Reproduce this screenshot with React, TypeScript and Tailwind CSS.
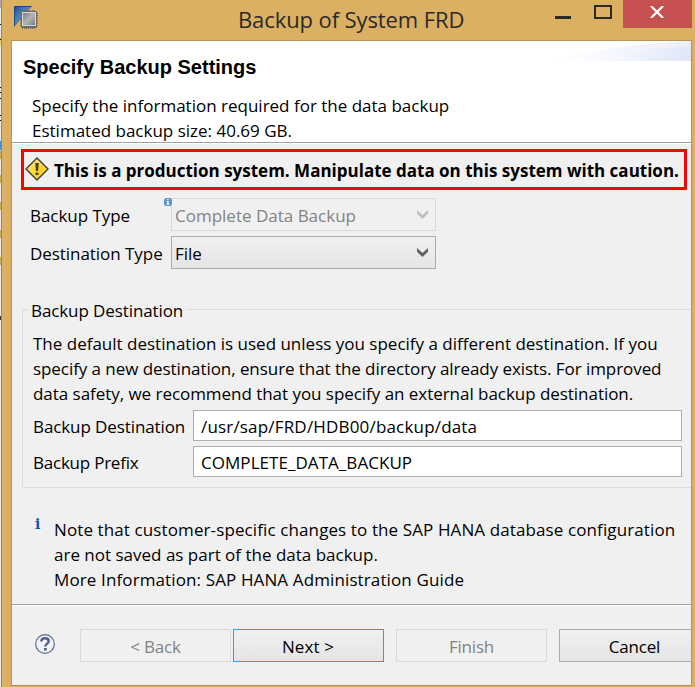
import type { ReactNode } from "react";
import clsx from "clsx";

function AppIcon() {
  const pins = [0, 1, 2, 3, 4, 5, 6];
  return (
    <svg width="25" height="24" viewBox="0 0 25 24" className="shrink-0">
      <defs>
        <linearGradient id="tri" x1="0" y1="0" x2="0.7" y2="0.7">
          <stop offset="0" stopColor="#174a86" />
          <stop offset="0.6" stopColor="#4f86bd" />
          <stop offset="1" stopColor="#1a4f8c" />
        </linearGradient>
        <linearGradient id="chip" x1="0" y1="0" x2="1" y2="1">
          <stop offset="0" stopColor="#808080" />
          <stop offset="0.5" stopColor="#b4b4b4" />
          <stop offset="1" stopColor="#7c7c7c" />
        </linearGradient>
      </defs>
      <path d="M0 0h18L0 21z" fill="url(#tri)" />
      <path d="M0 0h18l-1 1H1v18.5l-1 1z" fill="#1b4a80" />
      {pins.map(i => (
        <g key={i} fill="#5f5340" opacity="0.75">
          <rect x={8 + i * 2} y="4" width="1" height="19" />
          <rect x="6" y={7 + i * 2} width="18" height="1" />
        </g>
      ))}
      <rect x="7" y="5" width="16" height="17" rx="1" fill="#6a6a6a" />
      <rect x="8" y="6" width="14" height="14" fill="#d8d8d8" />
      <rect x="9" y="7" width="12" height="12" fill="url(#chip)" />
    </svg>
  );
}

function WarningIcon() {
  return (
    <svg width="24" height="24" viewBox="0 0 24 24" className="-mt-px shrink-0">
      <defs>
        <linearGradient id="warn" x1="0" y1="0" x2="1" y2="1">
          <stop offset="0" stopColor="#fff07a" />
          <stop offset="0.6" stopColor="#fbd228" />
          <stop offset="1" stopColor="#f0b400" />
        </linearGradient>
      </defs>
      <path d="M12 1 23 12 12 23 1 12z" fill="url(#warn)" stroke="#4a4637" strokeWidth="1.5" strokeLinejoin="round" />
      <path d="M12 3 21 12 12 21 3 12z" fill="none" stroke="#fbe88a" strokeWidth="0.8" />
      <path d="M10.2 6h3.6l-.8 8h-2z" fill="#4b3d14" />
      <rect x="10.5" y="15.5" width="3" height="2.6" rx="0.8" fill="#4b3d14" />
    </svg>
  );
}

function HelpIcon() {
  return (
    <svg width="20" height="20" viewBox="0 0 20 20" className="shrink-0">
      <circle cx="10" cy="10" r="9.3" fill="#f1f2f6" stroke="#5a6b8f" strokeWidth="1.2" />
      <path d="M6.3 7.6C6.3 5.2 7.8 4.2 9.9 4.2s3.8 1 3.8 3c0 2.3-3.4 2.5-3.4 5.3" fill="none" stroke="#4f6188" strokeWidth="2.4" />
      <rect x="9" y="14" width="2.7" height="2.5" fill="#4f6188" />
    </svg>
  );
}

function InfoBadge() {
  return (
    <svg width="8" height="8" viewBox="0 0 8 8" className="absolute -left-[8px] -top-px">
      <rect width="8" height="8" rx="2.8" fill="#5b95c9" />
      <path d="M3.2 1h1.4v1.2H3.2zM2.6 3h2v2.8h.8v.9h-3v-.9h.8V3.9h-.6z" fill="#fff" />
    </svg>
  );
}

function Select({ value, disabled, children }: { value: string; disabled?: boolean; children?: ReactNode }) {
  return (
    <div
      className={clsx(
        "relative flex h-[33px] w-[265px] items-center justify-between border pl-[3px] pr-[7px]",
        disabled ? "border-[#d9d9d9] text-[#838383]" : "border-[#acacac] bg-linear-to-b from-[#f0f0f0] to-[#e5e5e5]",
      )}
    >
      {children}
      <span className="pt-[2px]">{value}</span>
      <svg width="11" height="9" viewBox="0 0 11 9">
        <path d="M0 0l5.5 5L11 0v3.8L5.5 9 0 3.8z" fill={disabled ? "#bfbfbf" : "#606060"} />
      </svg>
    </div>
  );
}

function Field({ label, value, labelClass, valueClass }: { label: string; value: string; labelClass?: string; valueClass?: string }) {
  return (
    <div className="flex h-[31px] items-center">
      <span className={clsx("w-[160px] pt-[2px]", labelClass)}>{label}</span>
      <div className={clsx("flex h-full w-[489px] items-center border border-[#abadb3] bg-white pl-[7px] pt-[2px]", valueClass)}>
        {value}
      </div>
    </div>
  );
}

function Button({ label, disabled, primary }: { label: string; disabled?: boolean; primary?: boolean }) {
  return (
    <button
      disabled={disabled}
      className={clsx(
        "h-[33px] w-[151px] shrink-0 border pt-[2px]",
        disabled && "border-[#d9d9d9] text-[#838383]",
        !disabled && "bg-linear-to-b from-[#f0f0f0] to-[#e5e5e5]",
        primary ? "border-[#3399ff] pr-px tracking-[0.1px]" : "tracking-[-0.2px]",
        !disabled && !primary && "border-[#acacac]",
      )}
    >
      {label}
    </button>
  );
}

// the strip of the window behind the dialog that shows at the left edge
function BackgroundStrip() {
  return (
    <svg width="1" height="687" viewBox="0 0 1 687" className="shrink-0">
      <rect width="1" height="687" fill="#e6e8ec" />
      <rect width="1" height="8" fill="#a9adb3" />
      <rect y="37" width="1" height="9" fill="#e8d27a" />
      {[24, 39, 87, 92, 98, 115, 120].map(y => (
        <rect key={y} y={y} width="1" height="1" fill="#111" />
      ))}
      <rect y="141" width="1" height="9" fill="#3f8fdf" />
      {[151, 175, 202, 230, 257].map(y => (
        <rect key={y} y={y} width="1" height="8" fill="#c9a865" />
      ))}
      <rect y="316" width="1" height="4" fill="#333" />
    </svg>
  );
}

export default function App() {
  return (
    <div className="flex h-[687px] w-[695px] overflow-hidden whitespace-nowrap font-['Open_Sans',sans-serif] text-[17px] leading-[25px] text-black">
      <BackgroundStrip />
      <div className="flex w-[694px] shrink-0 flex-col border-l border-[#a58650] bg-[#dbb062] pl-[9px]">
        <div className="flex h-10 shrink-0">
          <div className="pl-[3px] pt-[6px]">
            <AppIcon />
          </div>
          <div className="flex-1 pl-[199px] pt-[4px] text-[22px] leading-[30px] tracking-[-0.1px] text-[#2a2a2a]">Backup of System FRD</div>
          <div className="flex shrink-0">
            <div className="mr-[23px] mt-4 h-[3px] w-4 bg-[#2a2a2a]" />
            <div className="mr-[11px] mt-[5px] h-[14px] w-[18px] border-2 border-[#2a2a2a]" />
            <div className="mr-[3px] flex h-7 w-[69px] justify-center bg-[#c75050] pr-px pt-[6px]">
              <svg width="14" height="12" viewBox="0 0 14 12">
                <path d="M1 0l12 12M13 0 1 12" stroke="#fff" strokeWidth="2.2" />
              </svg>
            </div>
          </div>
        </div>

        <div className="flex h-[646px] w-[681px] flex-col overflow-hidden border border-[#b7934f] bg-[#f0f0f0]">
          <div className="flex h-[102px] shrink-0 justify-between border-b border-[#a0a0a0] bg-white">
            <div className="pl-3 pt-[14px]">
              <h1 className="-ml-px font-['Liberation_Sans',sans-serif] text-[20px] font-bold leading-6">Specify Backup Settings</h1>
              <p className="pl-2 pt-[14px]">Specify the information required for the data backup</p>
              <p className="pl-2">Estimated backup size: 40.69 GB.</p>
            </div>
            <svg width="140" height="20" viewBox="0 0 140 20">
              <defs>
                <linearGradient id="sweep" x1="0" x2="1">
                  <stop offset="0" stopColor="#fff" />
                  <stop offset="0.4" stopColor="#f7f9fe" />
                  <stop offset="1" stopColor="#dfe6f8" />
                </linearGradient>
              </defs>
              <path d="M0 20C40 8 90 3 140 0v20z" fill="url(#sweep)" />
              <path d="M60 12C90 5 110 2 140 0v6C110 6 90 9 60 12z" fill="#fff" opacity="0.3" />
            </svg>
          </div>

          <div className="h-[461px] shrink-0 border-t border-white pt-[5px]">
            <div className="ml-[9px] flex h-[41px] w-[666px] items-center border-[3px] border-[#ff0000] pl-[1px] font-bold">
              <WarningIcon />
              <span className="pl-[5px] pt-[1px]">This is a production system. Manipulate data on this system with caution.</span>
            </div>

            <div className="mt-2 flex flex-col gap-[5px] pl-[18px]">
              <div className="flex items-center">
                <span className="w-[141px] pt-[2px] tracking-[-0.05px]">Backup Type</span>
                <Select value="Complete Data Backup" disabled>
                  <InfoBadge />
                </Select>
              </div>
              <div className="flex items-center">
                <span className="w-[141px] pt-[2px] tracking-[-0.05px]">Destination Type</span>
                <Select value="File" />
              </div>
            </div>

            <div className="ml-[10px] mt-10 h-[179px] border border-r-0 border-[#dcdcdc]">
              <div className="-mt-3 ml-[6px] w-[157px] bg-[#f0f0f0] pl-[2px] tracking-[-0.1px]">Backup Destination</div>
              <div className="pl-[10px] pt-2">
                <p>The default destination is used unless you specify a different destination. If you</p>
                <p className="tracking-[-0.065px]">specify a new destination, ensure that the directory already exists. For improved</p>
                <p className="tracking-[-0.04px]">data safety, we recommend that you specify an external backup destination.</p>
                <div className="mt-1 flex flex-col gap-[5px]">
                  <Field
                    label="Backup Destination"
                    value="/usr/sap/FRD/HDB00/backup/data"
                    labelClass="tracking-[-0.1px]"
                    valueClass="tracking-[0.18px]"
                  />
                  <Field label="Backup Prefix" value="COMPLETE_DATA_BACKUP" labelClass="tracking-[-0.23px]" valueClass="tracking-[0.05px]" />
                </div>
              </div>
            </div>

            <div className="mt-[29px] flex pl-[23px]">
              <span className="w-[19px] font-['DejaVu_Serif',serif] text-[14px] font-bold leading-[15px] text-[#0f56a3]">i</span>
              <div>
                <p className="tracking-[0.11px]">Note that customer-specific changes to the SAP HANA database configuration</p>
                <p>are not saved as part of the data backup.</p>
                <p className="tracking-[0.12px]">More Information: SAP HANA Administration Guide</p>
              </div>
            </div>
          </div>

          <div className="flex flex-1 border-t border-[#a0a0a0]">
            <div className="flex w-full border-t border-white pl-[23px] pt-[23px]">
              <div className="w-[45px] shrink-0 pt-[5px]">
                <HelpIcon />
              </div>
              <div className="flex gap-3">
                <div className="flex gap-[2px]">
                  <Button label="< Back" disabled />
                  <Button label="Next >" primary />
                </div>
                <Button label="Finish" disabled />
                <Button label="Cancel" />
              </div>
            </div>
          </div>
        </div>
      </div>
    </div>
  );
}
